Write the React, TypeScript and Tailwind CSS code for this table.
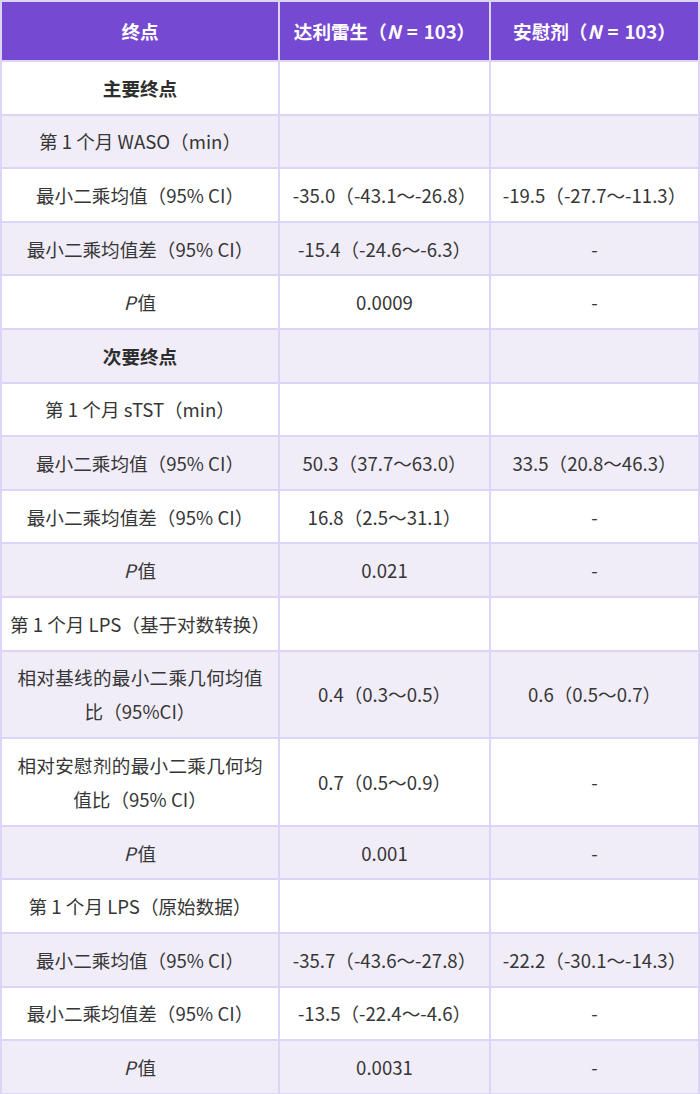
import React from "react";

type Row = {
  c1: React.ReactNode;
  c2?: React.ReactNode;
  c3?: React.ReactNode;
  bold?: boolean;
};

const P = () => <span className="italic mr-[2px]">P</span>;

const rows: Row[] = [
  { c1: "主要终点", bold: true },
  { c1: "第 1 个月 WASO（min）" },
  { c1: "最小二乘均值（95% CI）", c2: "-35.0（-43.1～-26.8）", c3: "-19.5（-27.7～-11.3）" },
  { c1: "最小二乘均值差（95% CI）", c2: "-15.4（-24.6～-6.3）", c3: "-" },
  { c1: <><P />值</>, c2: "0.0009", c3: "-" },
  { c1: "次要终点", bold: true },
  { c1: "第 1 个月 sTST（min）" },
  { c1: "最小二乘均值（95% CI）", c2: "50.3（37.7～63.0）", c3: "33.5（20.8～46.3）" },
  { c1: "最小二乘均值差（95% CI）", c2: "16.8（2.5～31.1）", c3: "-" },
  { c1: <><P />值</>, c2: "0.021", c3: "-" },
  { c1: "第 1 个月 LPS（基于对数转换）" },
  {
    c1: (
      <span className="block w-[245px]">
        <span className="block [text-align-last:justify]">相对基线的最小二乘几何均值</span>
        <span className="block text-center">比（95%CI）</span>
      </span>
    ),
    c2: "0.4（0.3～0.5）",
    c3: "0.6（0.5～0.7）",
  },
  {
    c1: (
      <span className="block w-[245px]">
        <span className="block [text-align-last:justify]">相对安慰剂的最小二乘几何均</span>
        <span className="block text-center">值比（95% CI）</span>
      </span>
    ),
    c2: "0.7（0.5～0.9）",
    c3: "-",
  },
  { c1: <><P />值</>, c2: "0.001", c3: "-" },
  { c1: "第 1 个月 LPS（原始数据）" },
  { c1: "最小二乘均值（95% CI）", c2: "-35.7（-43.6～-27.8）", c3: "-22.2（-30.1～-14.3）" },
  { c1: "最小二乘均值差（95% CI）", c2: "-13.5（-22.4～-4.6）", c3: "-" },
  { c1: <><P />值</>, c2: "0.0031", c3: "-" },
];

export default function App() {
  const cell =
    "flex items-center justify-center text-center px-[15px] py-[8.8px] leading-[34px] text-[18.6px] whitespace-nowrap";
  return (
    <div
      className="w-[700px] bg-white"
      style={{ fontFamily: '"Noto Sans CJK SC", "Noto Sans", sans-serif' }}
    >
      <div className="grid grid-cols-[276px_209px_207px] gap-[2px] p-[2px] bg-[#ddd5f8] text-[#363636]">
        <div className={`${cell} py-[12px] bg-[#7549d1] text-white font-bold`}>终点</div>
        <div className={`${cell} py-[12px] bg-[#7549d1] text-white font-bold`}>
          达利雷生（<span className="italic">N</span>
          <span className="mx-[6px]">=</span>103）
        </div>
        <div className={`${cell} py-[12px] bg-[#7549d1] text-white font-bold`}>
          安慰剂（<span className="italic">N</span>
          <span className="mx-[6px]">=</span>103）
        </div>
        {rows.map((r, i) => {
          const bg = i % 2 === 0 ? "bg-white" : "bg-[#f0edf8]";
          return (
            <React.Fragment key={i}>
              <div className={`${cell} ${bg} ${r.bold ? "font-bold text-[#2e2e2e]" : ""}`}>{r.c1}</div>
              <div className={`${cell} ${bg}`}>{r.c2 ?? ""}</div>
              <div className={`${cell} ${bg}`}>{r.c3 ?? ""}</div>
            </React.Fragment>
          );
        })}
      </div>
    </div>
  );
}
